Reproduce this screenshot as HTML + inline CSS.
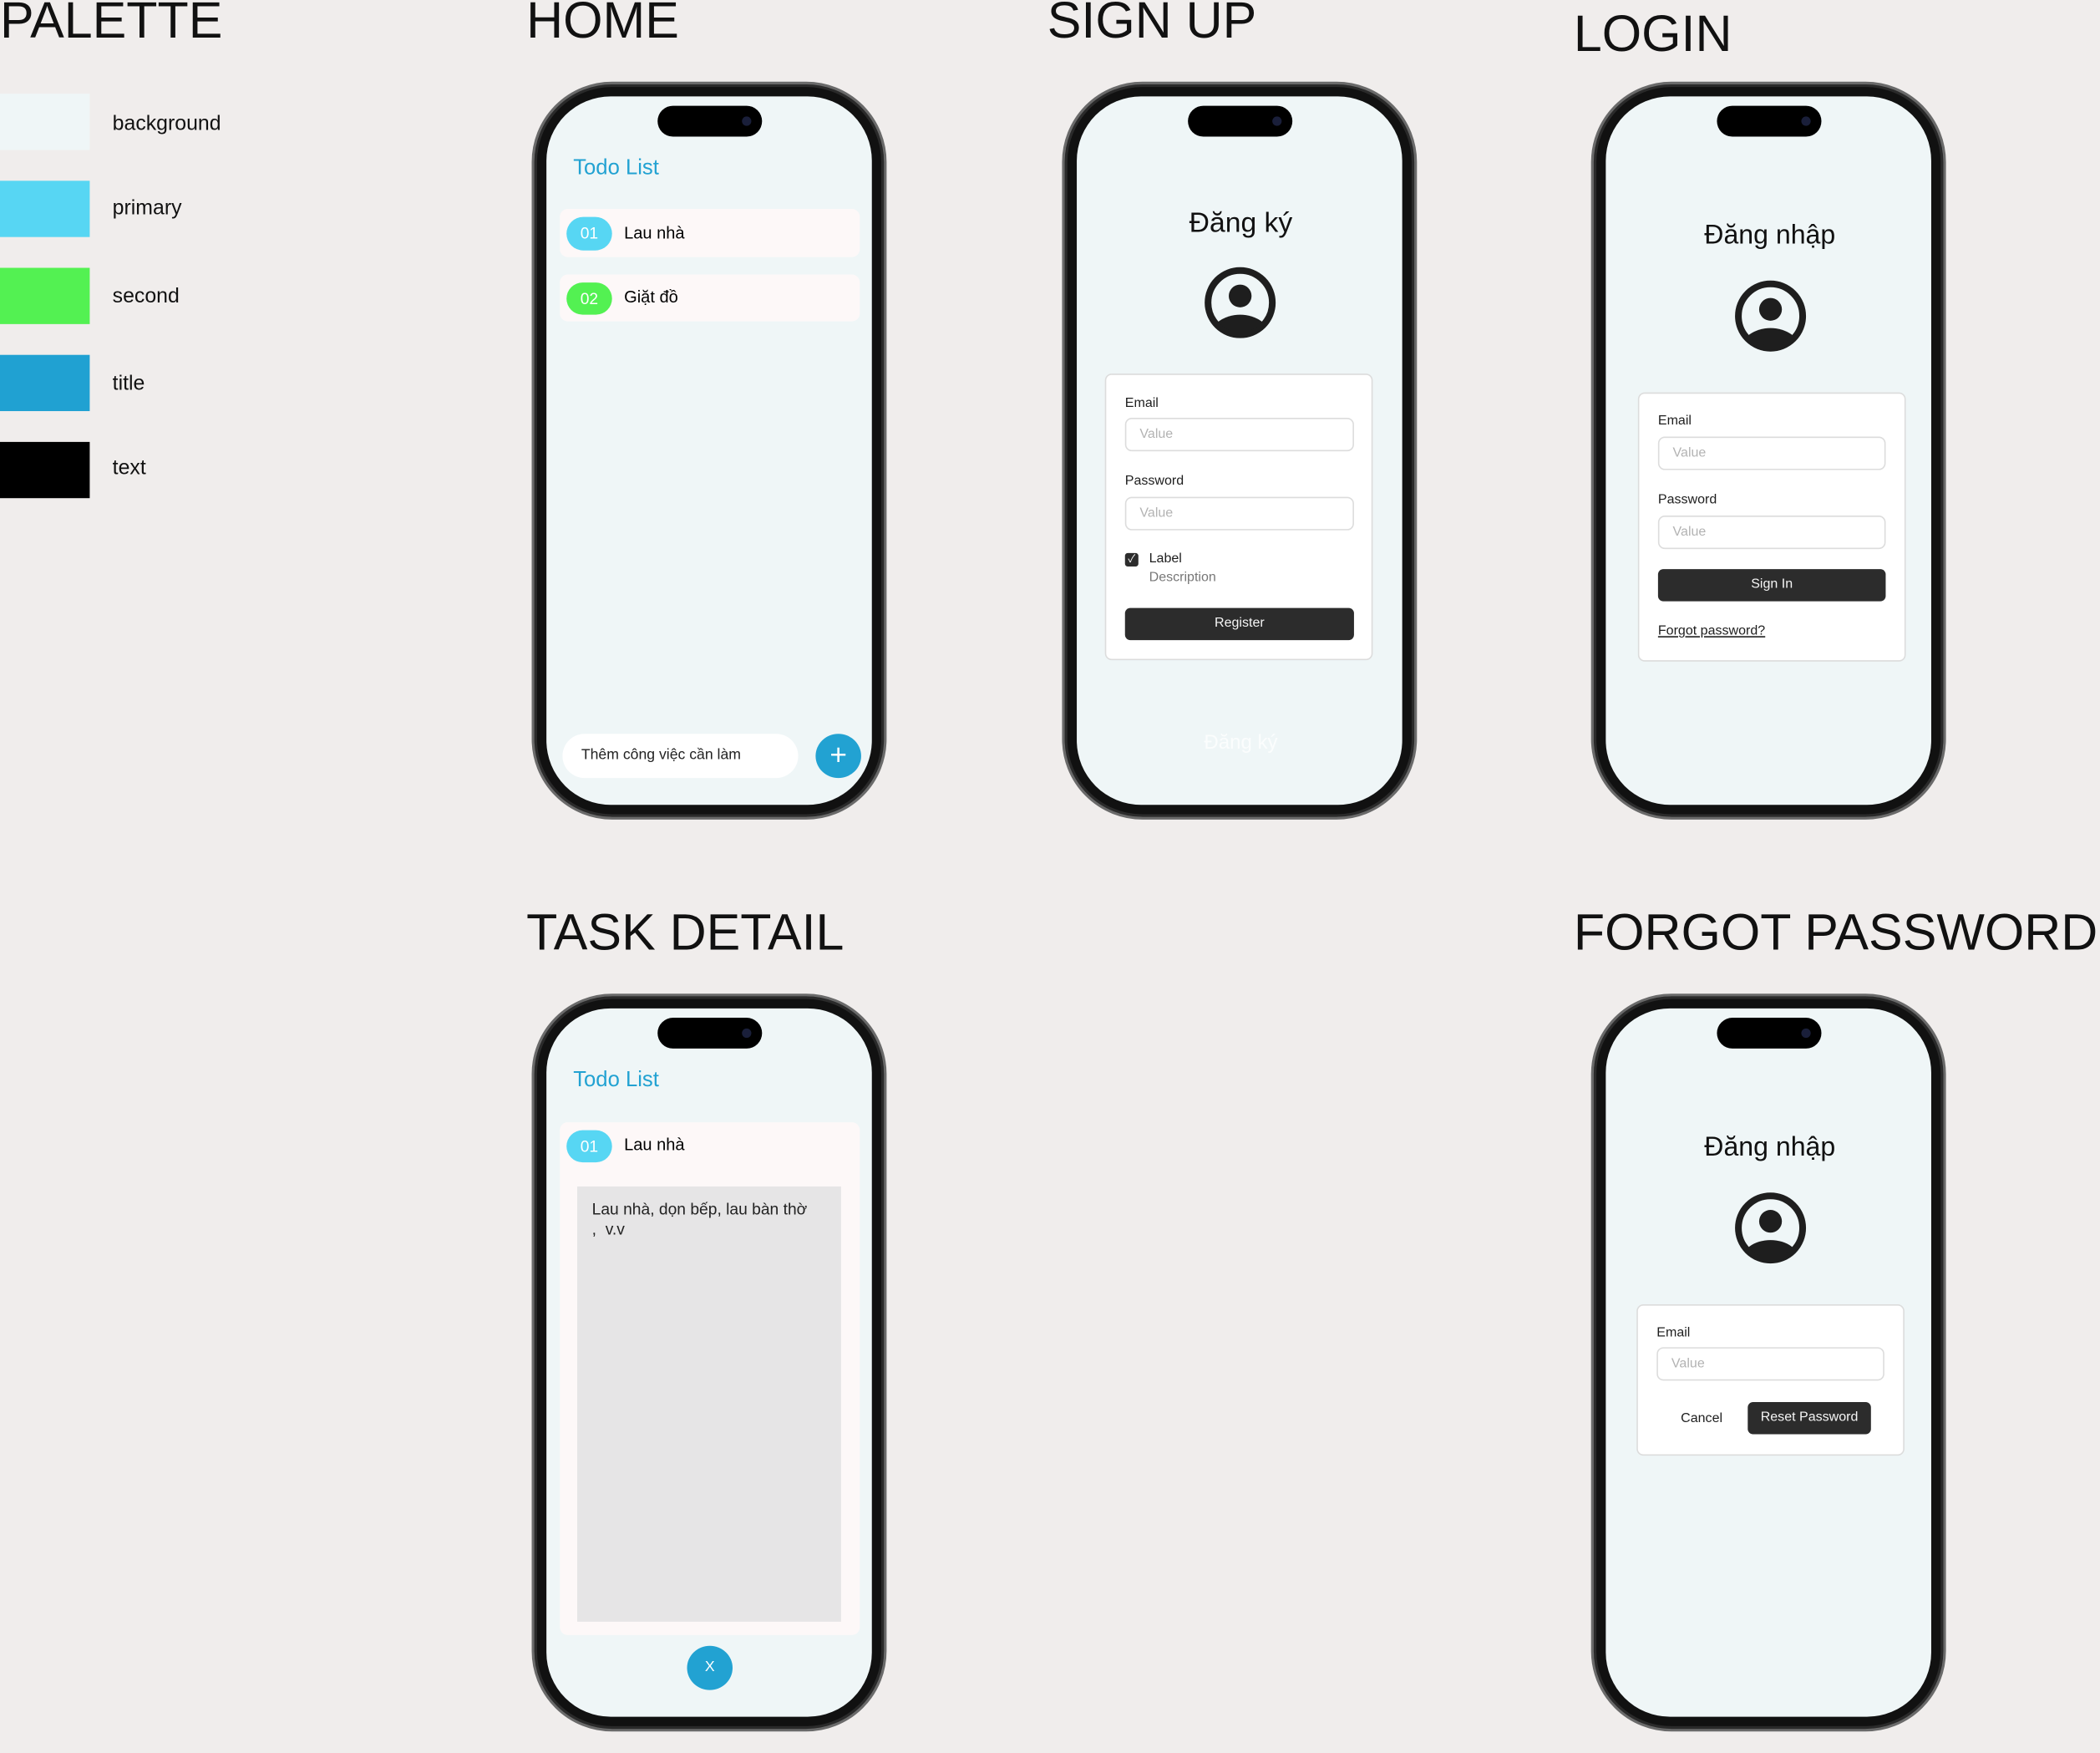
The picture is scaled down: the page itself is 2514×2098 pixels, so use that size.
<!DOCTYPE html>
<html><head><meta charset="utf-8"><style>
*{box-sizing:border-box;margin:0;padding:0}
html,body{width:2514px;height:2098px;overflow:hidden;background:#f0edec}
#w{position:absolute;left:0;top:0;width:1568px;height:1309px;transform:scale(1.6033,1.6027);transform-origin:0 0;font-family:"Liberation Sans","Noto Sans CJK SC",sans-serif;color:#000}
.a{position:absolute}
.h{position:absolute;font-size:38px;line-height:1;white-space:nowrap;color:#111}
.sw{position:absolute;left:0;width:67px;height:42px}
.sl{position:absolute;left:84px;font-size:15.5px;color:#111}
.ph{position:absolute;width:265px;height:551px;border-radius:60px;background:#111;border:2px solid #6a6a6a;box-shadow:inset 0 0 0 2px #2a2a2a}
.sc{position:absolute;left:9px;top:9px;right:9px;bottom:9px;border-radius:48px;background:#eff6f7;overflow:hidden}
.di{position:absolute;left:83px;top:7px;width:78px;height:23px;border-radius:12px;background:#000}
.di:after{content:"";position:absolute;right:8px;top:8px;width:7px;height:7px;border-radius:50%;background:#1a1f3a}
.card{position:absolute;background:#fff;border:1px solid #dcdcdc;border-radius:5px}
.lb{position:absolute;font-size:10px;color:#1e1e1e}
.in{position:absolute;height:25px;border:1px solid #dcdcdc;border-radius:5px;background:#fff;font-size:10px;color:#b3b3b3;padding-left:10px;line-height:23px}
.bk{position:absolute;background:#2c2c2c;color:#f5f5f5;border-radius:4px;font-size:10px;text-align:center}
</style></head><body><div id="w">

<div class="h" style="left:0;top:-3px">PALETTE</div>
<div class="h" style="left:393px;top:-3px">HOME</div>
<div class="h" style="left:782px;top:-3px">SIGN UP</div>
<div class="h" style="left:1175px;top:7px">LOGIN</div>
<div class="h" style="left:393px;top:678px">TASK DETAIL</div>
<div class="h" style="left:1175px;top:678px">FORGOT PASSWORD</div>

<div class="sw" style="top:70px;background:#eff6f7"></div><div class="sl" style="top:84px">background</div>
<div class="sw" style="top:135px;background:#57d6f3"></div><div class="sl" style="top:147px">primary</div>
<div class="sw" style="top:200px;background:#53f152"></div><div class="sl" style="top:213px">second</div>
<div class="sw" style="top:265px;background:#20a1d2"></div><div class="sl" style="top:278px">title</div>
<div class="sw" style="top:330px;background:#000"></div><div class="sl" style="top:341px">text</div>

<!-- HOME -->
<div class="ph" style="left:397px;top:61px">
<div class="sc">
<div class="di"></div>
<div class="a" style="left:20px;top:45px;font-size:16px;color:#22a2d2">Todo List</div>
<div class="a" style="left:10px;top:84px;width:224px;height:36px;background:#fdf8f8;border-radius:6px"></div>
<div class="a" style="left:15px;top:90px;width:34px;height:25px;background:#57d6f3;border-radius:13px;color:#fff;font-size:12px;text-align:center;line-height:25px">01</div>
<div class="a" style="left:58px;top:95px;font-size:12.5px">Lau nhà</div>
<div class="a" style="left:10px;top:133px;width:224px;height:35px;background:#fdf8f8;border-radius:6px"></div>
<div class="a" style="left:15px;top:139px;width:34px;height:24px;background:#53f152;border-radius:12px;color:#fff;font-size:12px;text-align:center;line-height:24px">02</div>
<div class="a" style="left:58px;top:143px;font-size:12.5px">Giặt đồ</div>
<div class="a" style="left:12px;top:476px;width:176px;height:33px;background:#fff;border-radius:17px;font-size:11px;color:#222;padding-left:14px;line-height:33px">Thêm công việc cần làm</div>
<div class="a" style="left:201px;top:476px;width:34px;height:33px;background:#22a2d2;border-radius:50%;color:#fff;font-size:22px;text-align:center;line-height:32px">+</div>
</div></div>

<!-- SIGN UP -->
<div class="ph" style="left:793px;top:61px">
<div class="sc">
<div class="di"></div>
<div class="a" style="left:0;width:245px;top:83px;text-align:center;font-size:21px;color:#111">Đăng ký</div>
<svg class="a" style="left:95px;top:127px" width="54" height="54" viewBox="0 0 54 54"><defs><clipPath id="c1"><circle cx="27" cy="27" r="22"/></clipPath></defs><circle cx="27" cy="27" r="24" fill="none" stroke="#1e1e1e" stroke-width="5"/><circle cx="27" cy="22" r="8.5" fill="#1e1e1e"/><ellipse cx="27" cy="52" rx="22" ry="16" fill="#1e1e1e" clip-path="url(#c1)"/></svg>
<div class="card" style="left:21px;top:207px;width:200px;height:214px"></div>
<div class="lb" style="left:36px;top:224px">Email</div>
<div class="in" style="left:36px;top:240px;width:171px">Value</div>
<div class="lb" style="left:36px;top:282px">Password</div>
<div class="in" style="left:36px;top:299px;width:171px">Value</div>
<div class="a" style="left:36px;top:341px;width:10px;height:10px;background:#2c2c2c;border-radius:2px;color:#fff;font-size:8px;line-height:10px;text-align:center">✓</div>
<div class="lb" style="left:54px;top:340px">Label</div>
<div class="lb" style="left:54px;top:354px;color:#777">Description</div>
<div class="bk" style="left:36px;top:382px;width:171px;height:24px;line-height:24px">Register</div>
<div class="a" style="left:0;width:245px;top:474px;text-align:center;font-size:15px;color:#fff;opacity:.8">Đăng ký</div>
</div></div>

<!-- LOGIN -->
<div class="ph" style="left:1188px;top:61px">
<div class="sc">
<div class="di"></div>
<div class="a" style="left:0;width:245px;top:93px;text-align:center;font-size:20px;color:#111">Đăng nhập</div>
<svg class="a" style="left:96px;top:137px" width="54" height="54" viewBox="0 0 54 54"><defs><clipPath id="c2"><circle cx="27" cy="27" r="22"/></clipPath></defs><circle cx="27" cy="27" r="24" fill="none" stroke="#1e1e1e" stroke-width="5"/><circle cx="27" cy="22" r="8.5" fill="#1e1e1e"/><ellipse cx="27" cy="52" rx="22" ry="16" fill="#1e1e1e" clip-path="url(#c2)"/></svg>
<div class="card" style="left:24px;top:221px;width:200px;height:201px"></div>
<div class="lb" style="left:39px;top:237px">Email</div>
<div class="in" style="left:39px;top:254px;width:170px">Value</div>
<div class="lb" style="left:39px;top:296px">Password</div>
<div class="in" style="left:39px;top:313px;width:170px">Value</div>
<div class="bk" style="left:39px;top:353px;width:170px;height:24px;line-height:24px">Sign In</div>
<div class="lb" style="left:39px;top:394px;text-decoration:underline">Forgot password?</div>
</div></div>

<!-- TASK DETAIL -->
<div class="ph" style="left:397px;top:742px">
<div class="sc">
<div class="di"></div>
<div class="a" style="left:20px;top:45px;font-size:16px;color:#22a2d2">Todo List</div>
<div class="a" style="left:10px;top:85px;width:224px;height:383px;background:#fdf8f8;border-radius:6px"></div>
<div class="a" style="left:15px;top:91px;width:34px;height:24px;background:#57d6f3;border-radius:12px;color:#fff;font-size:12px;text-align:center;line-height:24px">01</div>
<div class="a" style="left:58px;top:95px;font-size:12.5px">Lau nhà</div>
<div class="a" style="left:23px;top:133px;width:197px;height:325px;background:#e6e5e6"></div>
<div class="a" style="left:34px;top:143px;font-size:12px;line-height:15px;color:#222">Lau nhà, dọn bếp, lau bàn thờ<br>,&nbsp; v.v</div>
<div class="a" style="left:105px;top:476px;width:34px;height:33px;background:#22a2d2;border-radius:50%;color:#fff;font-size:11px;text-align:center;line-height:33px">X</div>
</div></div>

<!-- FORGOT -->
<div class="ph" style="left:1188px;top:742px">
<div class="sc">
<div class="di"></div>
<div class="a" style="left:0;width:245px;top:93px;text-align:center;font-size:20px;color:#111">Đăng nhập</div>
<svg class="a" style="left:96px;top:137px" width="54" height="54" viewBox="0 0 54 54"><defs><clipPath id="c3"><circle cx="27" cy="27" r="22"/></clipPath></defs><circle cx="27" cy="27" r="24" fill="none" stroke="#1e1e1e" stroke-width="5"/><circle cx="27" cy="22" r="8.5" fill="#1e1e1e"/><ellipse cx="27" cy="52" rx="22" ry="16" fill="#1e1e1e" clip-path="url(#c3)"/></svg>
<div class="card" style="left:23px;top:221px;width:200px;height:113px"></div>
<div class="lb" style="left:38px;top:237px">Email</div>
<div class="in" style="left:38px;top:253px;width:170px">Value</div>
<div class="lb" style="left:56px;top:301px">Cancel</div>
<div class="bk" style="left:106px;top:294px;width:92px;height:24px;line-height:24px">Reset Password</div>
</div></div>

</div></body></html>
